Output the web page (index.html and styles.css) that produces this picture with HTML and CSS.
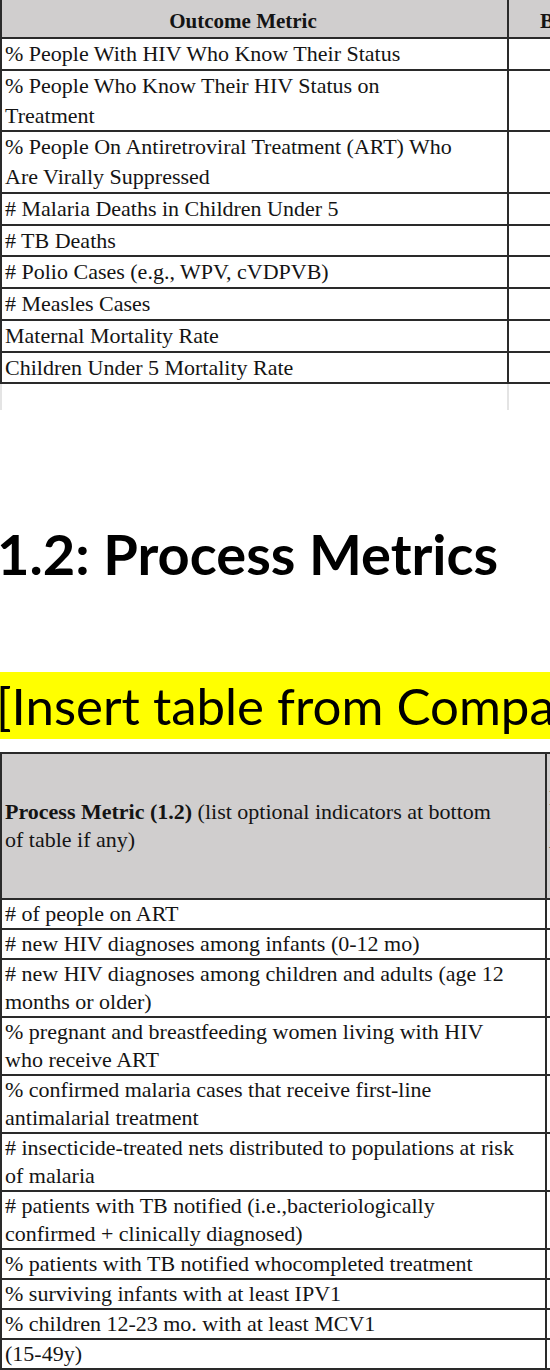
FILE: index.html
```html
<!DOCTYPE html>
<html>
<head>
<meta charset="utf-8">
<link rel="stylesheet" href="styles.css">
</head>
<body>
<div class="page">
  <table class="grid outcome">
    <colgroup><col class="c1"><col class="c2"></colgroup>
    <tr class="head"><th class="h1">Outcome Metric</th><th class="h2">Baseline</th></tr>
    <tr><td>% People With HIV Who Know Their Status</td><td></td></tr>
    <tr><td>% People Who Know Their HIV Status on Treatment</td><td></td></tr>
    <tr><td>% People On Antiretroviral Treatment (ART) Who Are Virally Suppressed</td><td></td></tr>
    <tr><td># Malaria Deaths in Children Under 5</td><td></td></tr>
    <tr><td># TB Deaths</td><td></td></tr>
    <tr><td># Polio Cases (e.g., WPV, cVDPVB)</td><td></td></tr>
    <tr><td># Measles Cases</td><td></td></tr>
    <tr><td>Maternal Mortality Rate</td><td></td></tr>
    <tr><td>Children Under 5 Mortality Rate</td><td></td></tr>
    <tr class="ghost"><td></td><td></td></tr>
  </table>

  <h2 class="section-title">1.2: Process Metrics</h2>

  <p class="highlight">[Insert table from Company Template]</p>

  <table class="grid process">
    <colgroup><col class="p1"><col class="p2"></colgroup>
    <tr class="head"><th><b>Process Metric (1.2)</b> (list optional indicators at bottom of table if any)</th><th class="side">Baseline<br>Source<br>Year</th></tr>
    <tr><td># of people on ART</td><td></td></tr>
    <tr><td># new HIV diagnoses among infants (0-12 mo)</td><td></td></tr>
    <tr><td># new HIV diagnoses among children and adults (age 12 months or older)</td><td></td></tr>
    <tr><td>% pregnant and breastfeeding women living with HIV who receive ART</td><td></td></tr>
    <tr><td>% confirmed malaria cases that receive first-line antimalarial treatment</td><td></td></tr>
    <tr><td># insecticide-treated nets distributed to populations at risk of malaria</td><td></td></tr>
    <tr><td># patients with TB notified (i.e.,bacteriologically confirmed + clinically diagnosed)</td><td></td></tr>
    <tr><td>% patients with TB notified whocompleted treatment</td><td></td></tr>
    <tr><td>% surviving infants with at least IPV1</td><td></td></tr>
    <tr><td>% children 12-23 mo. with at least MCV1</td><td></td></tr>
    <tr><td>(15-49y)</td><td></td></tr>
  </table>
</div>
</body>
</html>
```
FILE: styles.css
```css
html, body {
  margin: 0;
  padding: 0;
  background: #ffffff;
  overflow: hidden;
}

.page {
  width: 900px;
  color: #111;
}

.grid {
  border-collapse: collapse;
  table-layout: fixed;
  font-family: "Liberation Serif", "Times New Roman", serif;
  font-size: 22px;
  color: #141414;
}

.grid td, .grid th {
  border: 2px solid #2a2a2a;
  padding: 0 3px;
  vertical-align: top;
  text-align: left;
}

/* Outcome table */
.outcome {
  width: 900px;
}
.outcome .c1 { width: 507px; }
.outcome .c2 { width: 393px; }

.outcome td {
  line-height: 29.75px;
}
.outcome tr td:first-child {
  padding-right: 36px;
}

.outcome .head th {
  background: #d0cece;
  border-top: none;
  height: 32px;
  font-size: 21px;
  font-weight: bold;
  vertical-align: middle;
  line-height: 24px;
  padding-top: 5px;
  padding-bottom: 0;
}
.outcome .h1 {
  text-align: center;
  padding-right: 26px;
}
.outcome .h2 {
  padding-left: 31px;
}

.outcome .ghost td {
  height: 26px;
  border-left-color: #e4e4e4;
  border-right-color: #e4e4e4;
  border-bottom: none;
  border-top-color: #2a2a2a;
}

/* Heading */
.section-title {
  margin: 108px 0 0 -3px;
  font-family: "Lato", "Liberation Sans", sans-serif;
  font-weight: 700;
  font-size: 56px;
  line-height: 72px;
  color: #000;
  white-space: nowrap;
}

.highlight {
  margin: 82px 0 0 0;
  background: #ffff00;
  font-family: "Lato", "Liberation Sans", sans-serif;
  font-size: 51px;
  line-height: 67px;
  height: 67px;
  text-indent: -4px;
  white-space: nowrap;
  color: #000;
}

/* Process table */
.process {
  margin-top: 13px;
  width: 900px;
}
.process .p1 { width: 545px; }
.process .p2 { width: 355px; }

.process td {
  line-height: 28px;
}
.process tr td:first-child {
  padding-right: 28px;
}

.process .head th {
  background: #d0cece;
  height: 144px;
  vertical-align: middle;
  line-height: 28px;
  font-weight: normal;
  padding-right: 50px;
}
.process .head b {
  font-weight: bold;
}
.process .head .side {
  padding-left: 2px;
  padding-right: 3px;
  font-size: 20px;
}
```
